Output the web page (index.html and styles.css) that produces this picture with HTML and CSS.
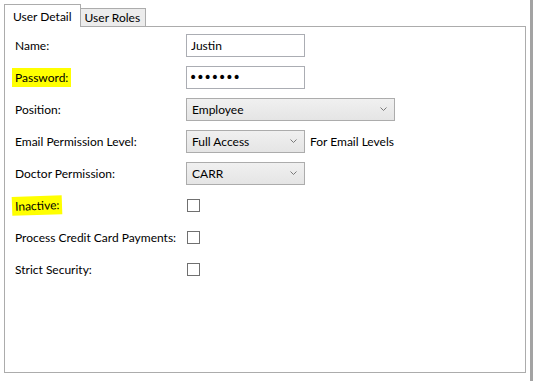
FILE: index.html
```html
<!DOCTYPE html>
<html lang="en">
<head>
    <meta charset="UTF-8">
    <meta name="viewport" content="width=device-width, initial-scale=1.0">
    <title>User Detail</title>
    <link rel="stylesheet" href="styles.css">
</head>
<body>
    <div class="window">
        <div class="tabs">
            <div class="tab selected">User Detail</div>
            <div class="tab">User Roles</div>
        </div>
        <div class="panel">
            <div class="form">
                <label class="field-label">Name:</label>
                <div class="field"><input type="text" class="textbox" value="Justin"></div>

                <label class="field-label"><span class="marked">Password:</span></label>
                <div class="field"><input type="password" class="textbox password" value="1234567"></div>

                <label class="field-label">Position:</label>
                <div class="field">
                    <div class="combo wide">
                        <span>Employee</span>
                        <svg class="chevron" width="7" height="5" viewBox="0 0 7 5"><path d="M0.5 0.5 L3.5 3.5 L6.5 0.5" fill="none" stroke="#7a7a7a" stroke-width="1"/></svg>
                    </div>
                </div>

                <label class="field-label">Email Permission Level:</label>
                <div class="field">
                    <div class="combo">
                        <span>Full Access</span>
                        <svg class="chevron" width="7" height="5" viewBox="0 0 7 5"><path d="M0.5 0.5 L3.5 3.5 L6.5 0.5" fill="none" stroke="#7a7a7a" stroke-width="1"/></svg>
                    </div>
                    <span class="note">For Email Levels</span>
                </div>

                <label class="field-label">Doctor Permission:</label>
                <div class="field">
                    <div class="combo">
                        <span>CARR</span>
                        <svg class="chevron" width="7" height="5" viewBox="0 0 7 5"><path d="M0.5 0.5 L3.5 3.5 L6.5 0.5" fill="none" stroke="#7a7a7a" stroke-width="1"/></svg>
                    </div>
                </div>

                <label class="field-label"><span class="marked tilt">Inactive:</span></label>
                <div class="field"><span class="checkbox"></span></div>

                <label class="field-label">Process Credit Card Payments:</label>
                <div class="field"><span class="checkbox"></span></div>

                <label class="field-label">Strict Security:</label>
                <div class="field"><span class="checkbox"></span></div>
            </div>
        </div>
    </div>
    <div class="scroll-edge"></div>
</body>
</html>
```

FILE: styles.css
```css
* {
    box-sizing: border-box;
}

body {
    margin: 0;
    height: 381px;
    display: flex;
    background: #fff;
    font-family: Lato, "Noto Sans", sans-serif;
    font-size: 12px;
    color: #000;
    overflow: hidden;
}

.window {
    width: 530px;
    padding: 4px 4px 0 4px;
}

.tabs {
    display: flex;
    align-items: flex-end;
}

.tab {
    height: 18px;
    padding: 0 5px 0 4px;
    display: flex;
    align-items: center;
    background: #ececec;
    border: 1px solid #acacac;
    border-bottom: none;
    border-left: none;
    white-space: nowrap;
}

.tab.selected {
    height: 23px;
    margin-bottom: -1px;
    padding: 0 8px;
    background: #fff;
    border-left: 1px solid #acacac;
    position: relative;
    z-index: 1;
}

.panel {
    height: 347px;
    border: 1px solid #acacac;
    padding: 2px 10px 0 10px;
}

.form {
    display: grid;
    grid-template-columns: 171px auto;
    grid-auto-rows: 32px;
    align-items: center;
}

.field-label {
    display: flex;
    align-items: center;
    white-space: nowrap;
}

.marked {
    background: #ffff00;
    margin-left: -3px;
    padding: 2px 3px 2px 3px;
}

.tilt {
    transform: rotate(-2deg);
}

.field {
    display: flex;
    align-items: center;
    gap: 5px;
    white-space: nowrap;
}

.textbox {
    width: 119px;
    height: 23px;
    border: 1px solid #abadb3;
    padding: 0 4px;
    font-family: inherit;
    font-size: 12px;
    color: #000;
    outline: none;
}

.password {
    font-family: "DejaVu Sans", sans-serif;
    font-size: 14px;
    letter-spacing: -1px;
    padding-left: 2px;
}

.combo {
    width: 119px;
    height: 23px;
    border: 1px solid #acacac;
    background: linear-gradient(#f0f0f0, #e5e5e5);
    display: flex;
    align-items: center;
    justify-content: space-between;
    padding: 0 7px 0 5px;
}

.combo.wide {
    width: 209px;
}

.chevron {
    display: block;
}

.checkbox {
    width: 13px;
    height: 13px;
    margin-left: 1px;
    border: 1px solid #707070;
    background: #fff;
}

.scroll-edge {
    width: 3px;
    height: 100%;
    background: #a3a3a3;
}
```
